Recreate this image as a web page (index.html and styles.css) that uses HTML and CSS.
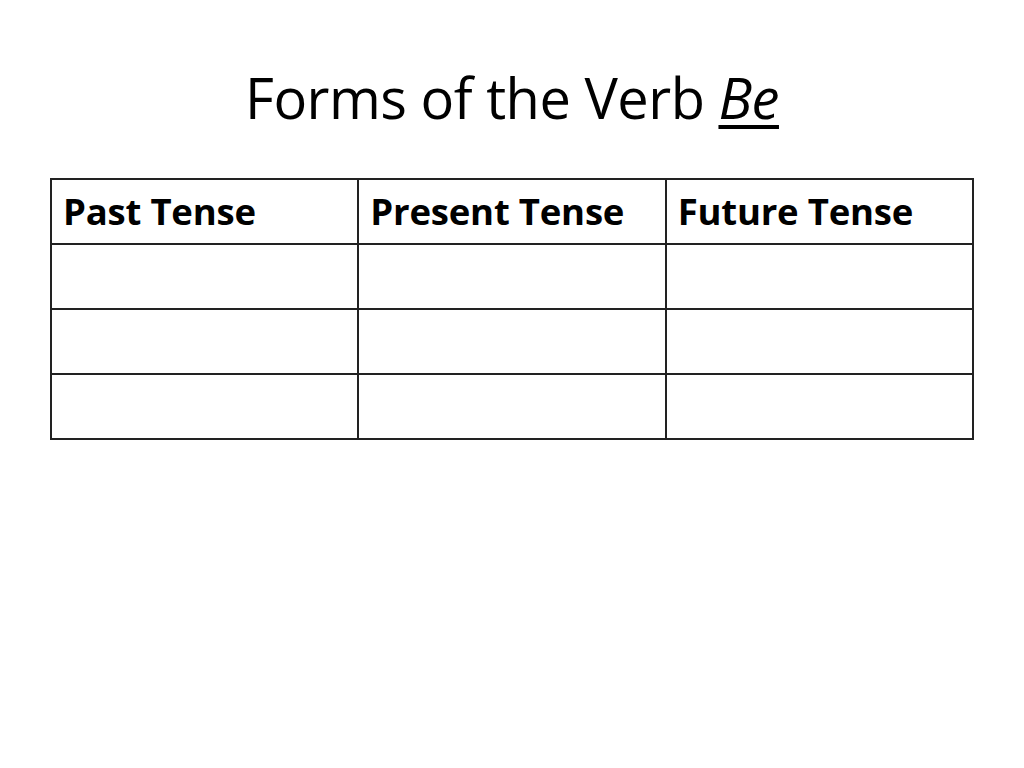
FILE: index.html
```html
<!DOCTYPE html>
<html>
<head>
<meta charset="utf-8">
<link rel="stylesheet" href="styles.css">
</head>
<body>
<div class="slide">
  <h1 class="title">Forms of the Verb <em class="be">Be</em></h1>
  <table class="grid">
    <tr class="head"><td>Past Tense</td><td>Present Tense</td><td>Future Tense</td></tr>
    <tr><td></td><td></td><td></td></tr>
    <tr><td></td><td></td><td></td></tr>
    <tr><td></td><td></td><td></td></tr>
  </table>
</div>
</body>
</html>
```
FILE: styles.css
```css
html, body { margin: 0; padding: 0; background: #fff; }
.slide {
  width: 1024px;
  height: 768px;
  box-sizing: border-box;
  padding: 62px 50px 0 50px;
  font-family: "Open Sans", "Liberation Sans", sans-serif;
  color: #000;
}
.title {
  margin: 0;
  font-weight: 400;
  font-size: 56px;
  line-height: 70px;
  text-align: center;
  letter-spacing: -0.5px;
}
.be { font-style: italic; text-decoration: underline; text-decoration-thickness: 4px; text-underline-offset: 6px; }
.grid {
  margin-top: 46px;
  width: 924px;
  border-collapse: collapse;
  table-layout: fixed;
}
.grid td {
  border: 2px solid #222;
  height: 65px;
  padding: 0 0 2px 11px;
  box-sizing: border-box;
  font-weight: 700;
  font-size: 36.5px;
  vertical-align: middle;
  letter-spacing: -0.2px;
}
```
